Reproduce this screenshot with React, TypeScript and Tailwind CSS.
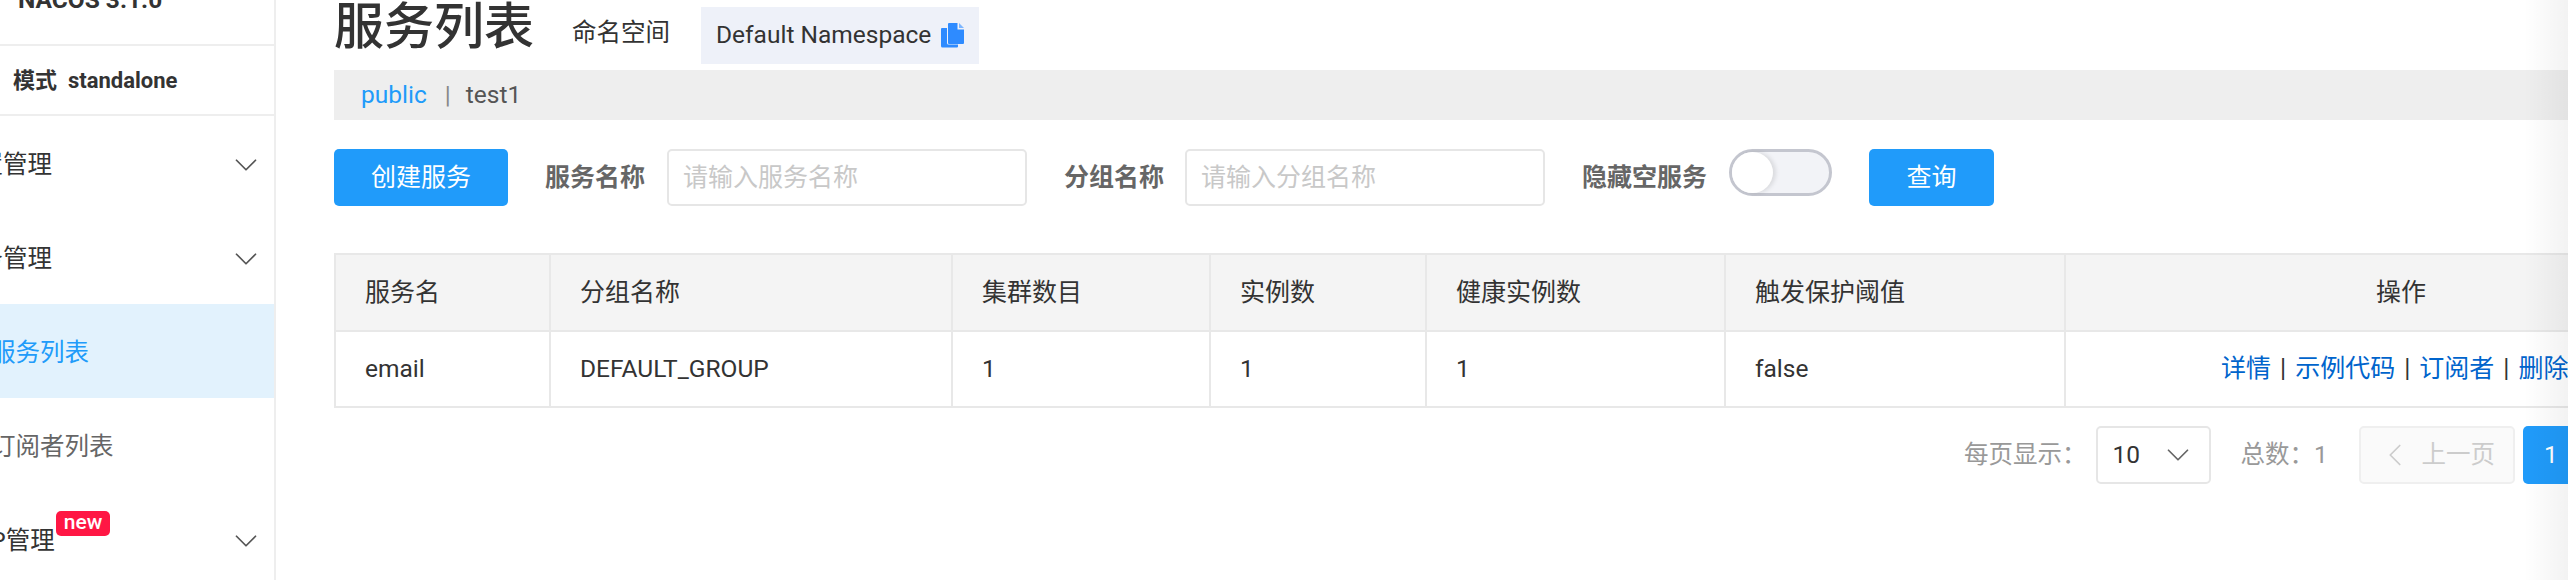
import { ChevronDown, ChevronLeft } from "lucide-react";

const headers = ["服务名", "分组名称", "集群数目", "实例数", "健康实例数", "触发保护阈值"];
const row = ["email", "DEFAULT_GROUP", "1", "1", "1", "false"];
const colWidths = ["w-[215px]", "w-[402px]", "w-[258px]", "w-[216px]", "w-[299px]", "w-[340px]", "w-[672px]"];
const actions = ["详情", "示例代码", "订阅者", "删除"];

function CopyIcon() {
  return (
    <svg width="23" height="25" viewBox="0 0 23 25" className="ml-[10px] shrink-0">
      <path d="M1 5h5v15a1.500 1.500 0 0 0 1.500 1.500H17v2a1 1 0 0 1-1 1H1.500a1.500 1.500 0 0 1-1.500-1.500V6a1 1 0 0 1 1-1z" fill="#2e8bff" />
      <path d="M8 0h8.500v6.500H23V20a1 1 0 0 1-1 1H8a1 1 0 0 1-1-1V1a1 1 0 0 1 1-1z" fill="#2e8bff" />
      <path d="M18 0l5 5h-5z" fill="#7db6ff" />
    </svg>
  );
}

function MenuItem({ label, offset, open, active, badge }: { label: string; offset: string; open?: boolean; active?: boolean; badge?: boolean }) {
  return (
    <div className={`relative flex h-[94px] shrink-0 items-center ${active ? "bg-[#e2f2fd] text-[#209bfa]" : open ? "text-[#333]" : "text-[#666]"}`}>
      <span className={`whitespace-nowrap pt-[5px] ${offset}`}>{label}</span>
      {badge && (
        <span className="absolute left-[56px] top-[19px] flex h-[25px] w-[54px] items-center justify-center rounded-[5px] bg-[#ff1744] pb-[3px] text-[21px] font-medium leading-none text-white">
          new
        </span>
      )}
      {open && <ChevronDown size={38} strokeWidth={1.1} className="absolute left-[227px] top-[30px] text-[#555]" />}
    </div>
  );
}

export default function App() {
  return (
    <div className="relative flex h-[580px] w-[2568px] overflow-hidden bg-white font-['Roboto','Noto_Sans_CJK_SC',sans-serif] text-[24.5px] text-[#333]">
      <aside className="flex w-[276px] shrink-0 flex-col overflow-hidden border-r-2 border-[#eeeeee]">
        <div className="flex h-[46px] shrink-0 items-start border-b-2 border-[#eeeeee]">
          <span className="ml-[18px] mt-[-14px] text-[24.5px] font-bold leading-[28px] whitespace-nowrap">NACOS 3.1.0</span>
        </div>
        <div className="flex h-[70px] shrink-0 items-center border-b-2 border-[#eeeeee] pl-[13px] text-[22px] font-bold">
          模式&nbsp;&nbsp;standalone
        </div>
        <div className="flex flex-col">
          <MenuItem label="配置管理" offset="ml-[-46px]" open />
          <MenuItem label="服务管理" offset="ml-[-46px]" open />
          <MenuItem label="服务列表" offset="ml-[-9px]" active />
          <MenuItem label="订阅者列表" offset="ml-[-9px]" />
          <MenuItem label="MCP管理" offset="ml-[-47px]" open badge />
        </div>
      </aside>

      <main className="min-w-0 flex-1 overflow-hidden pl-[58px]">
        <div className="flex h-[70px] items-center">
          <h1 className="mb-[16px] mr-[38px] text-[50px] font-medium leading-none whitespace-nowrap">服务列表</h1>
          <span className="mb-[4px] mr-[31px]">命名空间</span>
          <div className="flex h-[57px] w-[278px] items-center bg-[#eef1f9] pl-[15px]">
            <span>Default Namespace</span>
            <CopyIcon />
          </div>
        </div>

        <div className="flex h-[50px] w-[2300px] items-center bg-[#eeeeee] pl-[27px]">
          <span className="text-[#209bfa]">public</span>
          <span className="ml-[18px] text-[#888]">|</span>
          <span className="ml-[15px] text-[#555]">test1</span>
        </div>

        <div className="mt-[29px] flex h-[57px] items-center text-[25px]">
          <button className="h-[57px] w-[174px] rounded-[5px] bg-[#209bfa] text-white">创建服务</button>
          <label className="ml-[37px] w-[122px] shrink-0 font-bold text-[#666]">服务名称</label>
          <input
            placeholder="请输入服务名称"
            className="h-[57px] w-[360px] rounded-[5px] border-2 border-[#e6e6e6] pl-[14px] outline-none placeholder:text-[#c8c8c8]"
          />
          <label className="ml-[37px] w-[121px] shrink-0 font-bold text-[#666]">分组名称</label>
          <input
            placeholder="请输入分组名称"
            className="h-[57px] w-[360px] rounded-[5px] border-2 border-[#e6e6e6] pl-[14px] outline-none placeholder:text-[#c8c8c8]"
          />
          <label className="ml-[37px] w-[147px] shrink-0 font-bold text-[#666]">隐藏空服务</label>
          <div className="mb-[10px] h-[47px] w-[103px] shrink-0 rounded-full border-[3px] border-[#c4c6cf] bg-[#f2f3f7]">
            <div className="h-[41px] w-[41px] rounded-full bg-white shadow-[3px_0_4px_rgba(0,0,0,0.1)]" />
          </div>
          <button className="ml-[37px] h-[57px] w-[125px] rounded-[5px] bg-[#209bfa] text-white">查询</button>
        </div>

        <table className="mt-[47px] w-[2402px] table-fixed border-collapse">
          <colgroup>
            {colWidths.map((w) => (
              <col key={w} className={w} />
            ))}
          </colgroup>
          <thead>
            <tr className="h-[77px] bg-[#f4f4f4] text-[25px]">
              {headers.map((h) => (
                <th key={h} className="border-2 border-[#e8e8e8] pl-[29px] text-left font-normal">
                  {h}
                </th>
              ))}
              <th className="border-2 border-[#e8e8e8] text-center font-normal">操作</th>
            </tr>
          </thead>
          <tbody>
            <tr className="h-[76px]">
              {row.map((c, i) => (
                <td key={i} className="border-2 border-[#e8e8e8] pl-[29px]">
                  {c}
                </td>
              ))}
              <td className="border-2 border-[#e8e8e8] whitespace-nowrap pl-[155px] text-[25px]">
                {actions.map((a, i) => (
                  <span key={a}>
                    {i > 0 && <span className="mx-[9px]">|</span>}
                    <span className="text-[#0064cc]">{a}</span>
                  </span>
                ))}
              </td>
            </tr>
          </tbody>
        </table>

        <div className="mt-[18px] flex h-[58px] items-center whitespace-nowrap pl-[1630px] text-[#999]">
          <span className="shrink-0">每页显示：</span>
          <div className="ml-[9px] flex h-[58px] w-[115px] shrink-0 items-center justify-between rounded-[5px] border-2 border-[#e6e6e6] pl-[15px] pr-[12px] text-[#333]">
            <span>10</span>
            <ChevronDown size={38} strokeWidth={1.1} className="text-[#666]" />
          </div>
          <span className="ml-[30px] w-[118px] shrink-0">总数：1</span>
          <div className="flex h-[58px] w-[156px] shrink-0 items-center rounded-[5px] border-2 border-[#efefef] bg-[#fafafa] pl-[15px] text-[#cccccc]">
            <ChevronLeft size={38} strokeWidth={1.1} />
            <span className="ml-[8px]">上一页</span>
          </div>
          <button className="ml-[8px] h-[58px] w-[57px] shrink-0 rounded-[5px] bg-[#209bfa] text-white">1</button>
        </div>
      </main>

      <div className="absolute right-0 top-0 h-full w-[44px] bg-gradient-to-r from-transparent to-black/5" />
    </div>
  );
}
